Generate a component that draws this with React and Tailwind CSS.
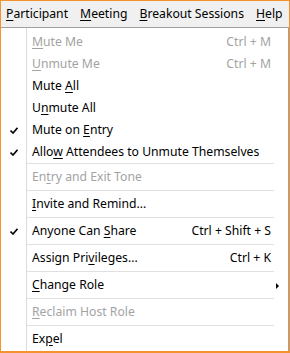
import React from 'react';

const font = { fontFamily: '"Noto Sans", "Open Sans", sans-serif' };

const U = ({ children }) => <span className="underline underline-offset-2">{children}</span>;

const Check = () => (
  <svg width="8" height="7" viewBox="0 0 8 7" className="block">
    <path d="M0.5 3.5 L3 6 L7.5 0.8" fill="none" stroke="#000" strokeWidth="1.6" />
  </svg>
);

const Item = ({ label, shortcut, checked, disabled, submenu, tall }) => (
  <div
    className={`flex items-center ${tall ? 'h-[26px] pt-px' : 'h-[22px]'} ${disabled ? 'text-[#a3a3a3]' : 'text-black'}`}
  >
    <div className="w-[26px] flex justify-center">{checked && <Check />}</div>
    <div className="flex-1 pl-[5px] whitespace-nowrap">{label}</div>
    {shortcut && <div className="whitespace-nowrap">{shortcut}</div>}
    <div className="w-[17px] pl-[5px] flex items-center">
      {submenu && (
        <svg width="3" height="6" viewBox="0 0 3 6" className="block">
          <path d="M0 0 L3 3 L0 6 Z" fill="#000" />
        </svg>
      )}
    </div>
  </div>
);

const Sep = () => <div className="ml-[26px] mr-[14px] h-px bg-[#e0e0e0]" />;

export default function App() {
  return (
    <div
      className="w-[290px] h-[353px] flex flex-col overflow-hidden bg-white border border-b-2 border-[#f5922e] text-[12.2px] leading-none"
      style={font}
    >
      <div className="h-[27px] shrink-0 bg-[#f0f0f0] border-b border-[#a0a0a0] flex items-center pl-[5px] gap-[12px] text-black">
        <span><U>P</U>articipant</span>
        <span><U>M</U>eeting</span>
        <span><U>B</U>reakout Sessions</span>
        <span><U>H</U>elp</span>
      </div>
      <div className="flex-1 flex flex-col pt-[3px] border-r border-[#a0a0a0] bg-[linear-gradient(to_right,#fff_25px,#dcdcdc_25px,#dcdcdc_26px,#fff_26px)]">
        <Item disabled label={<><U>M</U>ute Me</>} shortcut="Ctrl + M" />
        <Item disabled label={<><U>U</U>nmute Me</>} shortcut="Ctrl + M" />
        <Item label={<>Mute <U>A</U>ll</>} />
        <Item label={<>U<U>n</U>mute All</>} />
        <Item checked label={<>Mute on <U>E</U>ntry</>} />
        <Item checked label={<>Allo<U>w</U> Attendees to Unmute Themselves</>} />
        <Sep />
        <Item tall disabled label={<>En<U>t</U>ry and Exit Tone</>} />
        <Sep />
        <Item tall label={<><U>I</U>nvite and Remind...</>} />
        <Sep />
        <Item tall checked label={<>Anyone Can <U>S</U>hare</>} shortcut="Ctrl + Shift + S" />
        <Sep />
        <Item tall label={<>Assign Pri<U>v</U>ileges...</>} shortcut="Ctrl + K" />
        <Sep />
        <Item tall submenu label={<><U>C</U>hange Role</>} />
        <Sep />
        <Item tall disabled label={<><U>R</U>eclaim Host Role</>} />
        <Sep />
        <Item tall label={<>Ex<U>p</U>el</>} />
      </div>
    </div>
  );
}
